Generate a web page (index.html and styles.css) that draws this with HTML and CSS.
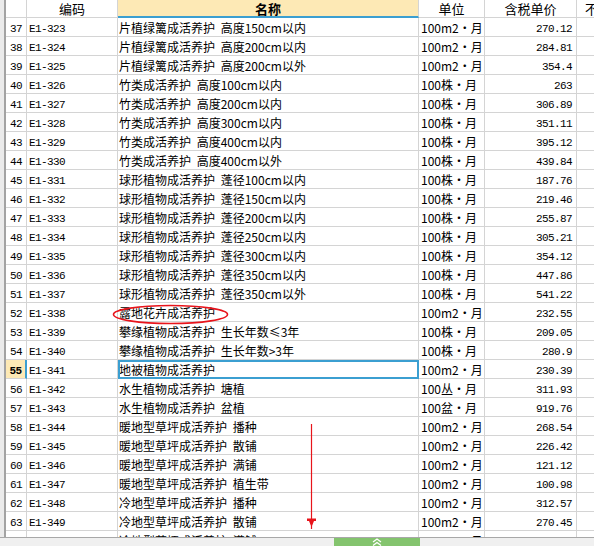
FILE: index.html
```html
<!DOCTYPE html>
<html>
<head>
<meta charset="utf-8">
<link rel="stylesheet" href="styles.css">
</head>
<body>
<div class="app">
  <div class="main">
    <div class="leftbar"></div>
    <div class="sheet">
      <div class="grid">
        <div class="c h rn"></div><div class="c h">编码</div><div class="c h sel">名称</div><div class="c h">单位</div><div class="c h">含税单价</div><div class="c h">不含税单价</div>

        <div class="c rn">37</div><div class="c code">E1-323</div><div class="c name">片植绿篱成活养护 高度150cm以内</div><div class="c unit">100m2・月</div><div class="c num">270.12</div><div class="c"></div>
        <div class="c rn">38</div><div class="c code">E1-324</div><div class="c name">片植绿篱成活养护 高度200cm以内</div><div class="c unit">100m2・月</div><div class="c num">284.81</div><div class="c"></div>
        <div class="c rn">39</div><div class="c code">E1-325</div><div class="c name">片植绿篱成活养护 高度200cm以外</div><div class="c unit">100m2・月</div><div class="c num">354.4</div><div class="c"></div>
        <div class="c rn">40</div><div class="c code">E1-326</div><div class="c name">竹类成活养护 高度100cm以内</div><div class="c unit">100株・月</div><div class="c num">263</div><div class="c"></div>
        <div class="c rn">41</div><div class="c code">E1-327</div><div class="c name">竹类成活养护 高度200cm以内</div><div class="c unit">100株・月</div><div class="c num">306.89</div><div class="c"></div>
        <div class="c rn">42</div><div class="c code">E1-328</div><div class="c name">竹类成活养护 高度300cm以内</div><div class="c unit">100株・月</div><div class="c num">351.11</div><div class="c"></div>
        <div class="c rn">43</div><div class="c code">E1-329</div><div class="c name">竹类成活养护 高度400cm以内</div><div class="c unit">100株・月</div><div class="c num">395.12</div><div class="c"></div>
        <div class="c rn">44</div><div class="c code">E1-330</div><div class="c name">竹类成活养护 高度400cm以外</div><div class="c unit">100株・月</div><div class="c num">439.84</div><div class="c"></div>
        <div class="c rn">45</div><div class="c code">E1-331</div><div class="c name">球形植物成活养护 蓬径100cm以内</div><div class="c unit">100株・月</div><div class="c num">187.76</div><div class="c"></div>
        <div class="c rn">46</div><div class="c code">E1-332</div><div class="c name">球形植物成活养护 蓬径150cm以内</div><div class="c unit">100株・月</div><div class="c num">219.46</div><div class="c"></div>
        <div class="c rn">47</div><div class="c code">E1-333</div><div class="c name">球形植物成活养护 蓬径200cm以内</div><div class="c unit">100株・月</div><div class="c num">255.87</div><div class="c"></div>
        <div class="c rn">48</div><div class="c code">E1-334</div><div class="c name">球形植物成活养护 蓬径250cm以内</div><div class="c unit">100株・月</div><div class="c num">305.21</div><div class="c"></div>
        <div class="c rn">49</div><div class="c code">E1-335</div><div class="c name">球形植物成活养护 蓬径300cm以内</div><div class="c unit">100株・月</div><div class="c num">354.12</div><div class="c"></div>
        <div class="c rn">50</div><div class="c code">E1-336</div><div class="c name">球形植物成活养护 蓬径350cm以内</div><div class="c unit">100株・月</div><div class="c num">447.86</div><div class="c"></div>
        <div class="c rn">51</div><div class="c code">E1-337</div><div class="c name">球形植物成活养护 蓬径350cm以外</div><div class="c unit">100株・月</div><div class="c num">541.22</div><div class="c"></div>
        <div class="c rn">52</div><div class="c code">E1-338</div><div class="c name">露地花卉成活养护</div><div class="c unit">100m2・月</div><div class="c num">232.55</div><div class="c"></div>
        <div class="c rn">53</div><div class="c code">E1-339</div><div class="c name">攀缘植物成活养护 生长年数≤3年</div><div class="c unit">100株・月</div><div class="c num">209.05</div><div class="c"></div>
        <div class="c rn">54</div><div class="c code">E1-340</div><div class="c name">攀缘植物成活养护 生长年数&gt;3年</div><div class="c unit">100株・月</div><div class="c num">280.9</div><div class="c"></div>
        <div class="c rn active">55</div><div class="c code">E1-341</div><div class="c name cur">地被植物成活养护</div><div class="c unit">100m2・月</div><div class="c num">230.39</div><div class="c"></div>
        <div class="c rn">56</div><div class="c code">E1-342</div><div class="c name">水生植物成活养护 塘植</div><div class="c unit">100丛・月</div><div class="c num">311.93</div><div class="c"></div>
        <div class="c rn">57</div><div class="c code">E1-343</div><div class="c name">水生植物成活养护 盆植</div><div class="c unit">100盆・月</div><div class="c num">919.76</div><div class="c"></div>
        <div class="c rn">58</div><div class="c code">E1-344</div><div class="c name">暖地型草坪成活养护 播种</div><div class="c unit">100m2・月</div><div class="c num">268.54</div><div class="c"></div>
        <div class="c rn">59</div><div class="c code">E1-345</div><div class="c name">暖地型草坪成活养护 散铺</div><div class="c unit">100m2・月</div><div class="c num">226.42</div><div class="c"></div>
        <div class="c rn">60</div><div class="c code">E1-346</div><div class="c name">暖地型草坪成活养护 满铺</div><div class="c unit">100m2・月</div><div class="c num">121.12</div><div class="c"></div>
        <div class="c rn">61</div><div class="c code">E1-347</div><div class="c name">暖地型草坪成活养护 植生带</div><div class="c unit">100m2・月</div><div class="c num">100.98</div><div class="c"></div>
        <div class="c rn">62</div><div class="c code">E1-348</div><div class="c name">冷地型草坪成活养护 播种</div><div class="c unit">100m2・月</div><div class="c num">312.57</div><div class="c"></div>
        <div class="c rn">63</div><div class="c code">E1-349</div><div class="c name">冷地型草坪成活养护 散铺</div><div class="c unit">100m2・月</div><div class="c num">270.45</div><div class="c"></div>
        <div class="c rn">64</div><div class="c code">E1-350</div><div class="c name">冷地型草坪成活养护 满铺</div><div class="c unit">100m2・月</div><div class="c num">266.30</div><div class="c"></div>
      </div>
      <svg class="marks" width="594" height="546" viewBox="0 0 594 546">
        <ellipse cx="170.5" cy="314.5" rx="57" ry="9" fill="none" stroke="#e8141b" stroke-width="1.6"/>
        <line x1="311.5" y1="424" x2="311.5" y2="529" stroke="#e8141b" stroke-width="1.2"/>
        <polygon points="307,518.5 316,518.5 316,521 314,521 311.5,527 309,521 307,521" fill="#e8141b"/>
      </svg>
    </div>
  </div>
  <div class="statusbar">
    <div class="thumb">
      <svg class="chev" width="12" height="8" viewBox="0 0 12 8">
        <polyline points="2,4 6,1 10,4" fill="none" stroke="#ffffff" stroke-width="1.3"/>
        <polyline points="2,7.5 6,4.5 10,7.5" fill="none" stroke="#ffffff" stroke-width="1.3"/>
      </svg>
    </div>
  </div>
</div>
</body>
</html>
```
FILE: styles.css
```css
html, body {
  margin: 0;
  padding: 0;
  background: #ffffff;
  overflow: hidden;
}
.app {
  width: 594px;
  height: 546px;
  display: flex;
  flex-direction: column;
  overflow: hidden;
}
.main {
  display: flex;
  height: 537px;
  overflow: hidden;
}
.leftbar {
  width: 4px;
  flex: none;
  background: #ebebeb;
  border-right: 2px solid #a3a3a3;
}
.sheet {
  position: relative;
  flex: 1;
  overflow: hidden;
}
.grid {
  display: grid;
  grid-template-columns: 21px 91px 301px 66px 92px 82px;
  grid-auto-rows: 19px;
  grid-template-rows: 18px;
  font-family: "Noto Sans CJK SC", sans-serif;
  font-size: 12px;
  color: #000;
}
.c {
  box-sizing: border-box;
  border-right: 1px solid #d4d4d4;
  border-bottom: 1px solid #d4d4d4;
  padding: 2px 3px 0 3px;
  line-height: 16px;
  white-space: nowrap;
  overflow: hidden;
}
.h {
  text-align: center;
  padding-top: 0;
  line-height: 17px;
  font-size: 13px;
}
.h.sel {
  background: #fde9b5;
  font-weight: bold;
  border-bottom: 2px solid #3b9fd1;
}
.rn, .code, .num {
  font-family: "Liberation Mono", "DejaVu Sans Mono", monospace;
  font-size: 11px;
  letter-spacing: -0.6px;
  padding-top: 3px;
}
.rn {
  text-align: center;
  padding-left: 0;
  padding-right: 0;
}
.rn.active {
  background: #fde9b5;
  font-weight: bold;
  border-right: 2px solid #3b9fd1;
}
.code {
  padding-left: 2px;
}
.name {
  padding-left: 1px;
  word-spacing: 3px;
}
.unit {
  padding-left: 2px;
}
.num {
  text-align: right;
  padding-right: 4px;
}
.cur {
  outline: 2px solid #3b9fd1;
  outline-offset: -2px;
}
.marks {
  position: absolute;
  left: -6px;
  top: 0;
  pointer-events: none;
}
.statusbar {
  height: 9px;
  box-sizing: border-box;
  border-top: 1px solid #a8a8a8;
  background: #f0f0f0;
  position: relative;
}
.thumb {
  position: absolute;
  left: 334px;
  top: 0;
  width: 86px;
  height: 8px;
  background: #84c46e;
  overflow: hidden;
  display: flex;
  justify-content: center;
}
.chev {
  display: block;
}
```
